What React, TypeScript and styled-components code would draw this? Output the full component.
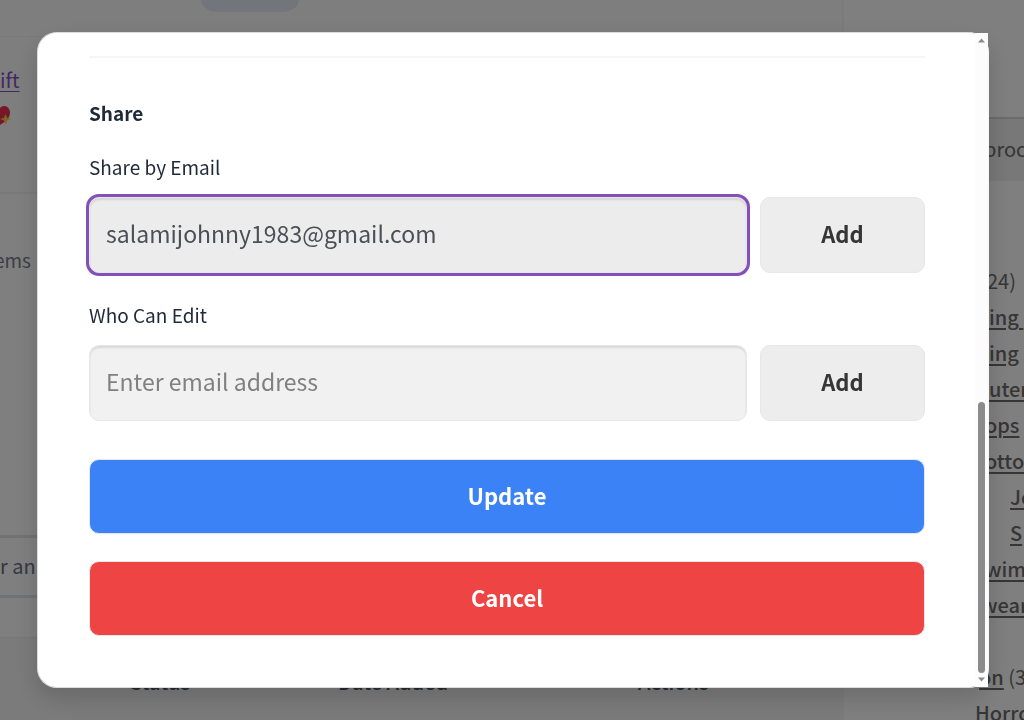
import React, { useState } from "react";
import styled, { createGlobalStyle, css } from "styled-components";

const GlobalStyle = createGlobalStyle`
  *, *::before, *::after { box-sizing: border-box; }
  body {
    margin: 0;
    background: #fff;
    color: #1f2937;
    font-family: "Noto Sans CJK SC", "Source Sans Pro", sans-serif;
    font-size: 19px;
    overflow: hidden;
  }
  button, input { font-family: inherit; }
`;

/* ---------- page behind the dialog ---------- */

const Page = styled.div`
  display: flex;
  height: 100vh;
  overflow: hidden;
`;

const Main = styled.main`
  flex: 1;
  min-width: 0;
  display: flex;
  flex-direction: column;
  border-right: 2px solid #f6f6f6;
`;

const TopStrip = styled.header`
  height: 36px;
  padding-left: 201px;
  background: #fcfcfc;
`;

const Pill = styled.div`
  width: 98px;
  height: 12px;
  border-radius: 0 0 18px 18px / 0 0 12px 12px;
  background: #e6eafa;
`;

const Intro = styled.section`
  height: 158px;
  padding-top: 26px;
  border-top: 1px solid #f4f4f4;
  border-bottom: 2px solid #f2f2f2;
  background: #fcfcfc;
  line-height: 34px;
`;

const VisitedLink = styled.a`
  display: block;
  color: #8a4fc0;
  font-size: 20px;
  text-decoration-thickness: 1px;
  text-underline-offset: 3px;
`;

const Heart = styled.svg`
  display: block;
  margin-top: 8px;
`;

const Items = styled.section`
  height: 341px;
  padding-top: 48px;
  color: #7a7f89;
  line-height: 36px;
`;

const ScrolledText = styled.span`
  display: block;
  margin-left: -6px;
`;

const SearchBar = styled.div`
  height: 63px;
  border: solid #e2e4e9;
  border-width: 3px 0;
  color: #6b7280;
  font-size: 20px;
  line-height: 55px;
`;

const TableArea = styled.section`
  flex: 1;
  margin-top: 39px;
  padding-left: 130px;
  border-top: 1px solid #eee;
  background: #f7f7f7;
`;

const Table = styled.table`
  width: 100%;
  border-collapse: collapse;
  table-layout: fixed;
`;

const HeadCell = styled.th<{ $width?: number }>`
  width: ${(p) => (p.$width ? `${p.$width}px` : "auto")};
  padding: 26px 0 0;
  color: #4b5563;
  font-size: 20px;
  font-weight: 500;
  line-height: 36px;
  text-align: left;
`;

const Sidebar = styled.aside`
  width: 180px;
  flex: none;
  overflow: hidden;
  white-space: nowrap;
  color: #6c6c6c;
  font-size: 20px;
`;

const SideHeading = styled.div`
  height: 64px;
  margin-top: 117px;
  padding-left: 140px;
  border-top: 2px solid #d8d8d8;
  background: #f0f0f0;
  line-height: 60px;
`;

const SideList = styled.ul`
  list-style: none;
  margin: 0;
  padding: 82px 0 0;
  line-height: 36px;
`;

const SideItem = styled.li<{ $indent: number; $spaced?: boolean }>`
  padding-left: ${(p) => p.$indent}px;
  margin-top: ${(p) => (p.$spaced ? 36 : 0)}px;
`;

const SideLink = styled.a`
  color: inherit;
  font-weight: 500;
  text-decoration: underline 2px;
  text-underline-offset: 3px;
`;

/* ---------- dialog ---------- */

const Overlay = styled.div`
  position: fixed;
  inset: 0;
  display: flex;
  padding: 32px 35px 32px 37px;
  background: rgba(0, 0, 0, 0.5);
`;

const Dialog = styled.div`
  flex: 1;
  min-width: 0;
  display: flex;
  border: 1px solid #dcdcdc;
  border-right-color: #f5f5f5;
  border-radius: 20px;
  background: #fff;
  box-shadow: 0 10px 24px rgba(0, 0, 0, 0.16);
`;

const Form = styled.form`
  flex: 1;
  min-width: 0;
  padding: 23px 50px 0 51px;
`;

const Divider = styled.hr`
  height: 2px;
  margin: 0 0 39px;
  border: 0;
  background: #f6f6f6;
`;

const Title = styled.h2`
  margin: 0 0 26px;
  font-size: 19px;
  font-weight: 700;
  line-height: 32px;
`;

const Field = styled.div`
  margin-bottom: 30px;
`;

const Label = styled.label`
  display: block;
  margin-bottom: 18px;
  line-height: 24px;
`;

const Row = styled.div`
  display: flex;
  gap: 13px;
`;

const box = css`
  padding: 0 16px 4px;
  border: 1px solid #e5e7eb;
  border-radius: 10px;
`;

const TextInput = styled.input<{ $active?: boolean }>`
  ${box}
  flex: 1;
  min-width: 0;
  height: 76px;
  outline: none;
  font-size: 23px;
  color: #4b4f56;
  background: ${(p) => (p.$active ? "#ececec" : "#f1f1f1")};
  box-shadow: inset 0 2px 2px rgba(0, 0, 0, 0.1)
    ${(p) => (p.$active ? ", 0 0 0 3px #8250b8" : "")};
  &::placeholder { color: #808080; opacity: 1; }
`;

const AddButton = styled.button`
  ${box}
  width: 165px;
  height: 76px;
  background: #ededed;
  color: #363636;
  font-size: 22px;
  font-weight: 700;
`;

const Actions = styled.div`
  display: flex;
  flex-direction: column;
  gap: 27px;
  margin-top: 38px;
`;

const ActionButton = styled.button<{ $color: string }>`
  ${box}
  height: 75px;
  background: ${(p) => p.$color};
  color: #fff;
  font-size: 22px;
  font-weight: 700;
`;

const ScrollTrack = styled.div`
  width: 13px;
  flex: none;
  display: flex;
  flex-direction: column;
  align-items: center;
  padding: 5px 0;
  background: #fcfcfc;
`;

const ScrollThumb = styled.div`
  width: 7px;
  height: 271px;
  margin: auto 0 4px;
  border-radius: 4px;
  background: #8b8b8b;
`;

const Arrow = ({ down = false }: { down?: boolean }) => (
  <svg width="7" height="5" viewBox="0 0 7 5" aria-hidden="true">
    <path d={down ? "M0 0.5h7L3.5 4.5z" : "M0 4.5h7L3.5 0.5z"} fill="#8b8b8b" />
  </svg>
);

const categories = [
  { text: "ing\u00a0", indent: 145 },
  { text: "ing", indent: 145 },
  { text: "uter", indent: 145 },
  { text: "ops", indent: 141 },
  { text: "otto", indent: 141 },
  { text: "Je", indent: 166 },
  { text: "S", indent: 166 },
  { text: "wim", indent: 141 },
  { text: "wear", indent: 137 },
];

export default function App() {
  const [shareEmail, setShareEmail] = useState("salamijohnny1983@gmail.com");
  const [editEmail, setEditEmail] = useState("");

  return (
    <>
      <GlobalStyle />
      <Page>
        <Main>
          <TopStrip>
            <Pill />
          </TopStrip>
          <Intro>
            <VisitedLink href="#gift">ift</VisitedLink>
            <Heart width="11" height="22" viewBox="0 0 11 22" aria-hidden="true">
              <path d="M0 3C3-1 10 1 10 8c0 5-5 9-10 12z" fill="#e8304f" />
              <path d="M5.500 9l1.600 3.800 3.800 1.200-3.800 1.400-1.600 4.200-1.600-4.200-3.800-1.400 3.800-1.200z" fill="#ffc83d" />
            </Heart>
          </Intro>
          <Items>
            <ScrolledText>ems</ScrolledText>
          </Items>
          <SearchBar>r an</SearchBar>
          <TableArea>
            <Table>
              <thead>
                <tr>
                  <HeadCell $width={208}>Status</HeadCell>
                  <HeadCell $width={300}>Date Added</HeadCell>
                  <HeadCell>Actions</HeadCell>
                </tr>
              </thead>
            </Table>
          </TableArea>
        </Main>
        <Sidebar>
          <SideHeading>proc</SideHeading>
          <SideList>
            <SideItem $indent={143}>24)</SideItem>
            {categories.map((c, i) => (
              <SideItem key={i} $indent={c.indent}>
                <SideLink href="#category">{c.text}</SideLink>
              </SideItem>
            ))}
            <SideItem $indent={135} $spaced>
              <SideLink href="#category">on</SideLink> (3
            </SideItem>
            <SideItem $indent={131}>
              <SideLink href="#category">Horro</SideLink>
            </SideItem>
          </SideList>
        </Sidebar>
      </Page>

      <Overlay>
        <Dialog role="dialog" aria-modal="true" aria-labelledby="share-title">
          <Form onSubmit={(e) => e.preventDefault()}>
            <Divider />
            <Title id="share-title">Share</Title>
            <Field>
              <Label htmlFor="share-email">Share by Email</Label>
              <Row>
                <TextInput
                  id="share-email"
                  type="email"
                  $active
                  value={shareEmail}
                  onChange={(e) => setShareEmail(e.target.value)}
                />
                <AddButton type="button">Add</AddButton>
              </Row>
            </Field>
            <Field>
              <Label htmlFor="edit-email">Who Can Edit</Label>
              <Row>
                <TextInput
                  id="edit-email"
                  type="email"
                  placeholder="Enter email address"
                  value={editEmail}
                  onChange={(e) => setEditEmail(e.target.value)}
                />
                <AddButton type="button">Add</AddButton>
              </Row>
            </Field>
            <Actions>
              <ActionButton type="submit" $color="#3b82f6">Update</ActionButton>
              <ActionButton type="button" $color="#ef4444">Cancel</ActionButton>
            </Actions>
          </Form>
          <ScrollTrack>
            <Arrow />
            <ScrollThumb />
            <Arrow down />
          </ScrollTrack>
        </Dialog>
      </Overlay>
    </>
  );
}
